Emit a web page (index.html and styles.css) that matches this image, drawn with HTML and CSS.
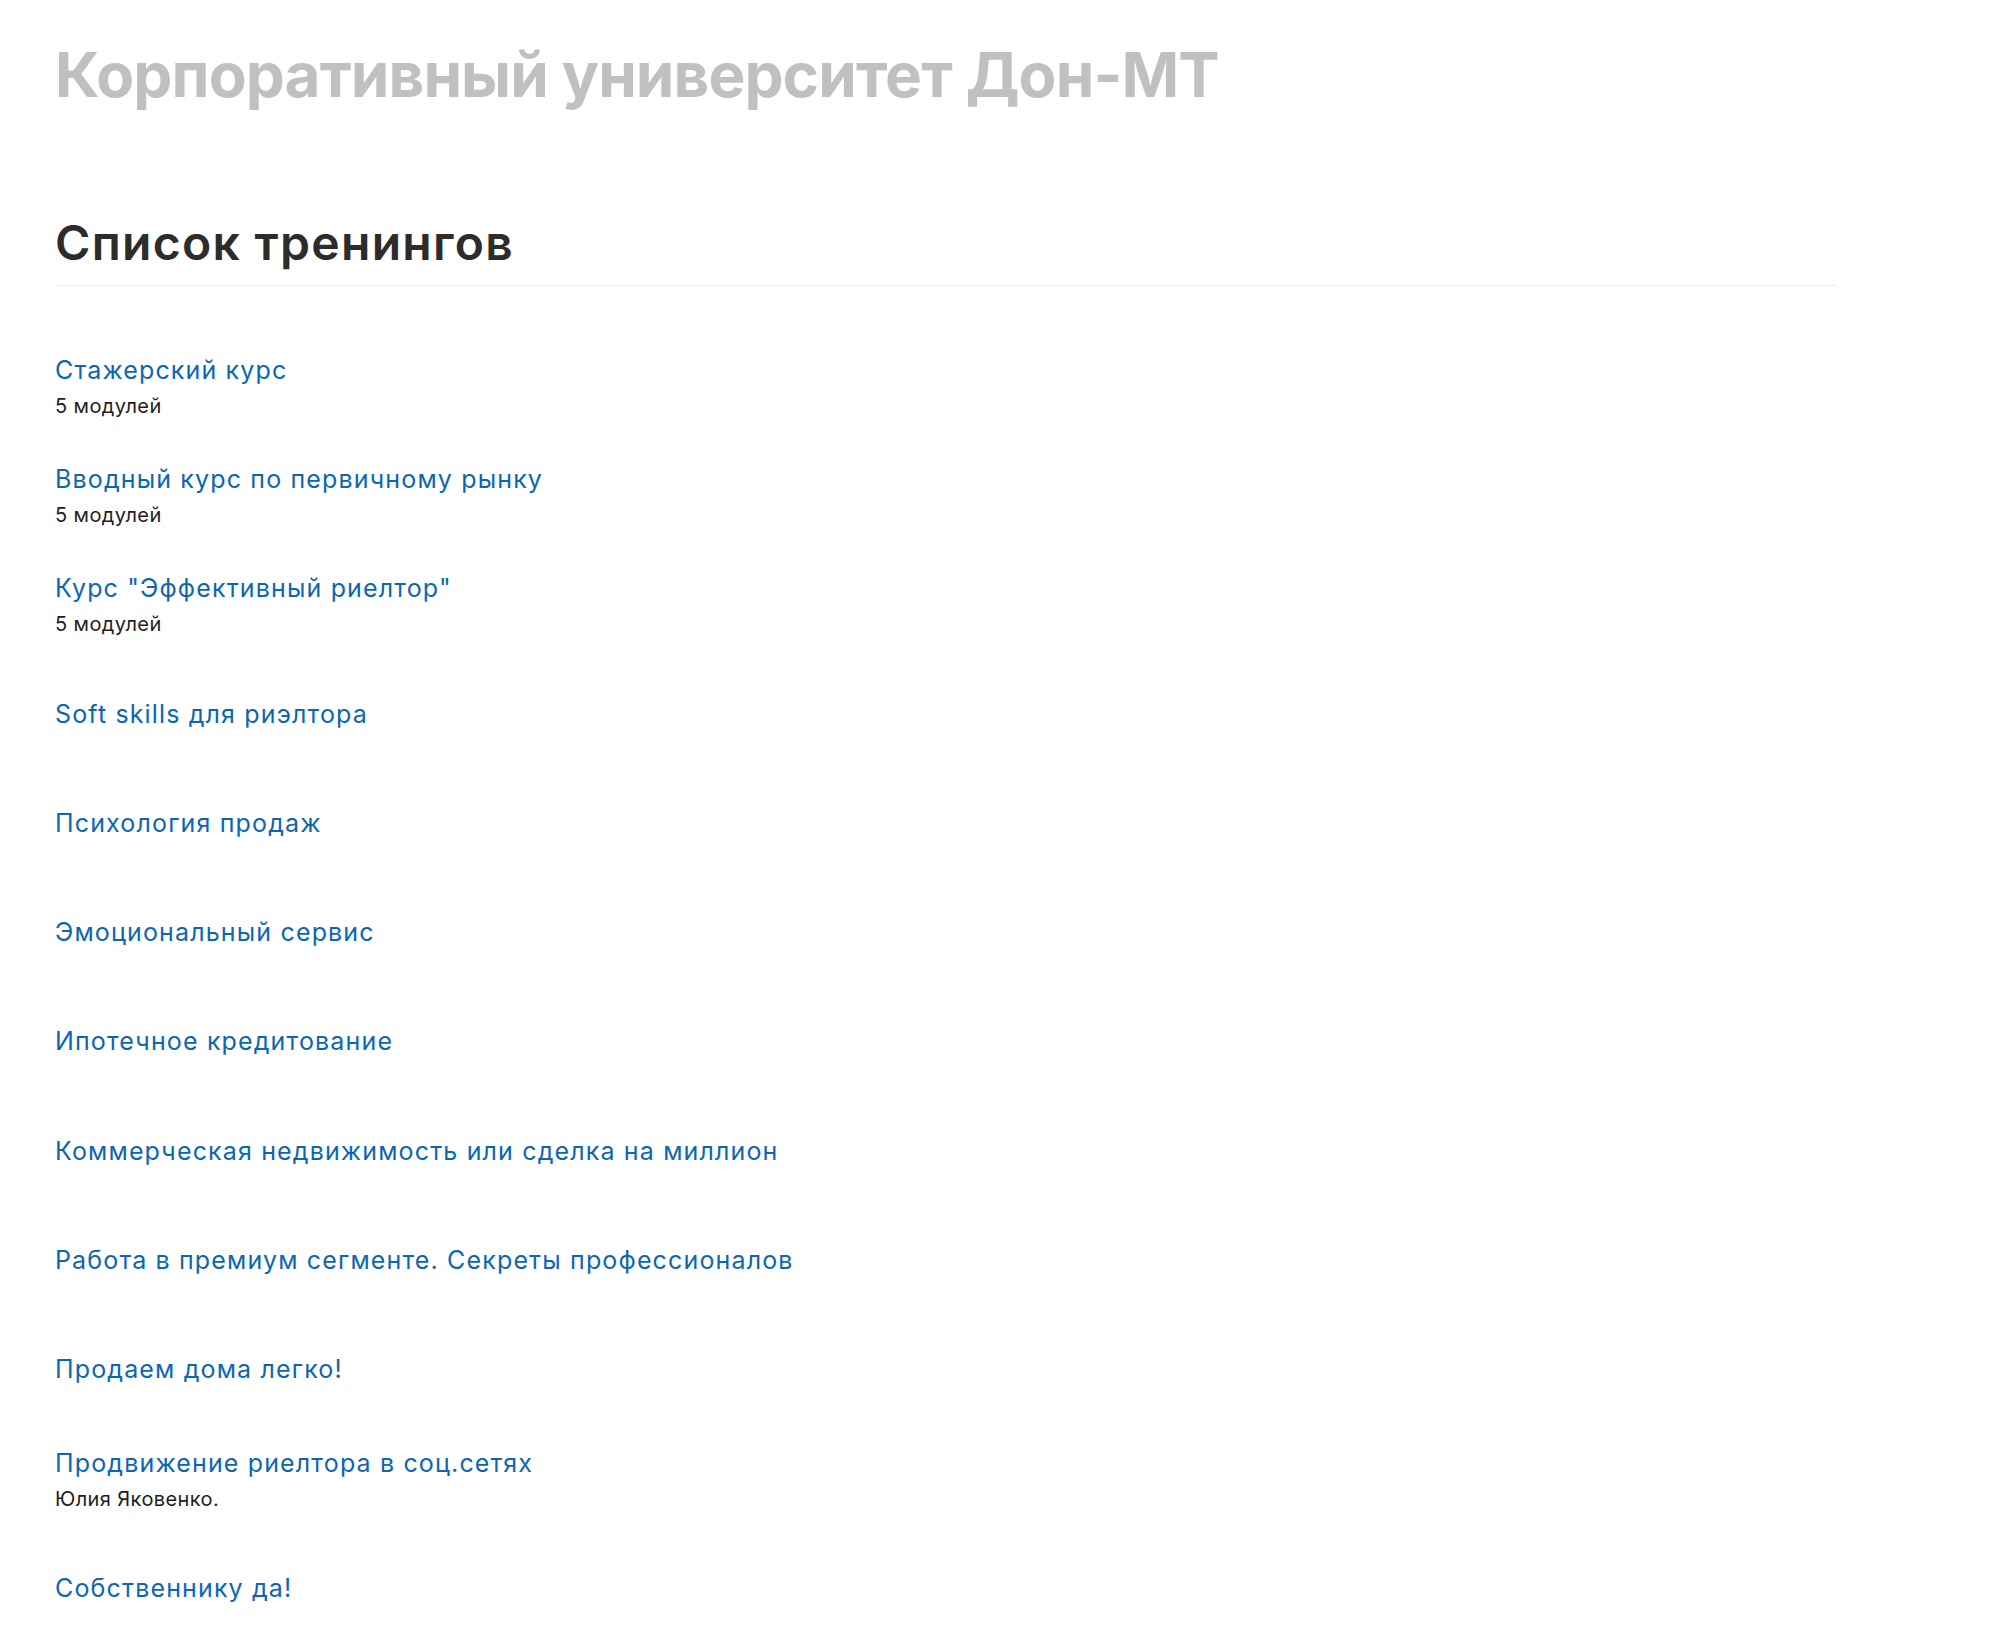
FILE: index.html
```html
<!DOCTYPE html>
<html lang="ru">
<head>
<meta charset="utf-8">
<title>Корпоративный университет Дон-МТ</title>
<link rel="stylesheet" href="styles.css">
</head>
<body>
<header class="site-header">
  <div class="site-title">Корпоративный университет Дон-МТ</div>
</header>
<main class="content">
  <h1 class="page-title">Список тренингов</h1>
  <ul class="course-list">
    <li class="course"><a class="course-link" href="#">Стажерский курс</a><p class="course-desc">5 модулей</p></li>
    <li class="course"><a class="course-link" href="#">Вводный курс по первичному рынку</a><p class="course-desc">5 модулей</p></li>
    <li class="course"><a class="course-link" href="#">Курс "Эффективный риелтор"</a><p class="course-desc">5 модулей</p></li>
    <li class="course"><a class="course-link" href="#">Soft skills для риэлтора</a></li>
    <li class="course"><a class="course-link" href="#">Психология продаж</a></li>
    <li class="course"><a class="course-link" href="#">Эмоциональный сервис</a></li>
    <li class="course"><a class="course-link" href="#">Ипотечное кредитование</a></li>
    <li class="course"><a class="course-link" href="#">Коммерческая недвижимость или сделка на миллион</a></li>
    <li class="course"><a class="course-link" href="#">Работа в премиум сегменте. Секреты профессионалов</a></li>
    <li class="course"><a class="course-link" href="#">Продаем дома легко!</a></li>
    <li class="course"><a class="course-link" href="#">Продвижение риелтора в соц.сетях</a><p class="course-desc">Юлия Яковенко.</p></li>
    <li class="course"><a class="course-link" href="#">Собственнику да!</a></li>
  </ul>
</main>
</body>
</html>
```
FILE: styles.css
```css
html, body {
  margin: 0;
  padding: 0;
  background: #ffffff;
}
body {
  font-family: Inter, "Noto Sans", "Liberation Sans", sans-serif;
  color: #222222;
  overflow: hidden;
}
.site-header {
  padding: 38px 0 0 55px;
}
.site-title {
  font-size: 62px;
  line-height: 74px;
  font-weight: 700;
  color: #c0c0c0;
  letter-spacing: -0.9px;
}
.content {
  width: 1781px;
  margin-left: 55px;
  padding-top: 102px;
}
.page-title {
  margin: 0;
  font-size: 48px;
  line-height: 58px;
  font-weight: 600;
  color: #2c2c2c;
  letter-spacing: 1.3px;
  padding-bottom: 13px;
  border-bottom: 1px solid #ececec;
}
.course-list {
  list-style: none;
  margin: 45px 0 0;
  padding: 0;
}
.course {
  height: 109.3px;
  display: flex;
  flex-direction: column;
  justify-content: center;
  align-items: flex-start;
}
.course-link {
  font-size: 25px;
  line-height: 36px;
  letter-spacing: 1.15px;
  color: #0c66b0;
  text-decoration: none;
}
.course-desc {
  margin: 4px 0 0;
  font-size: 20px;
  line-height: 28px;
  letter-spacing: 0.4px;
  color: #1e1e1e;
}
```
